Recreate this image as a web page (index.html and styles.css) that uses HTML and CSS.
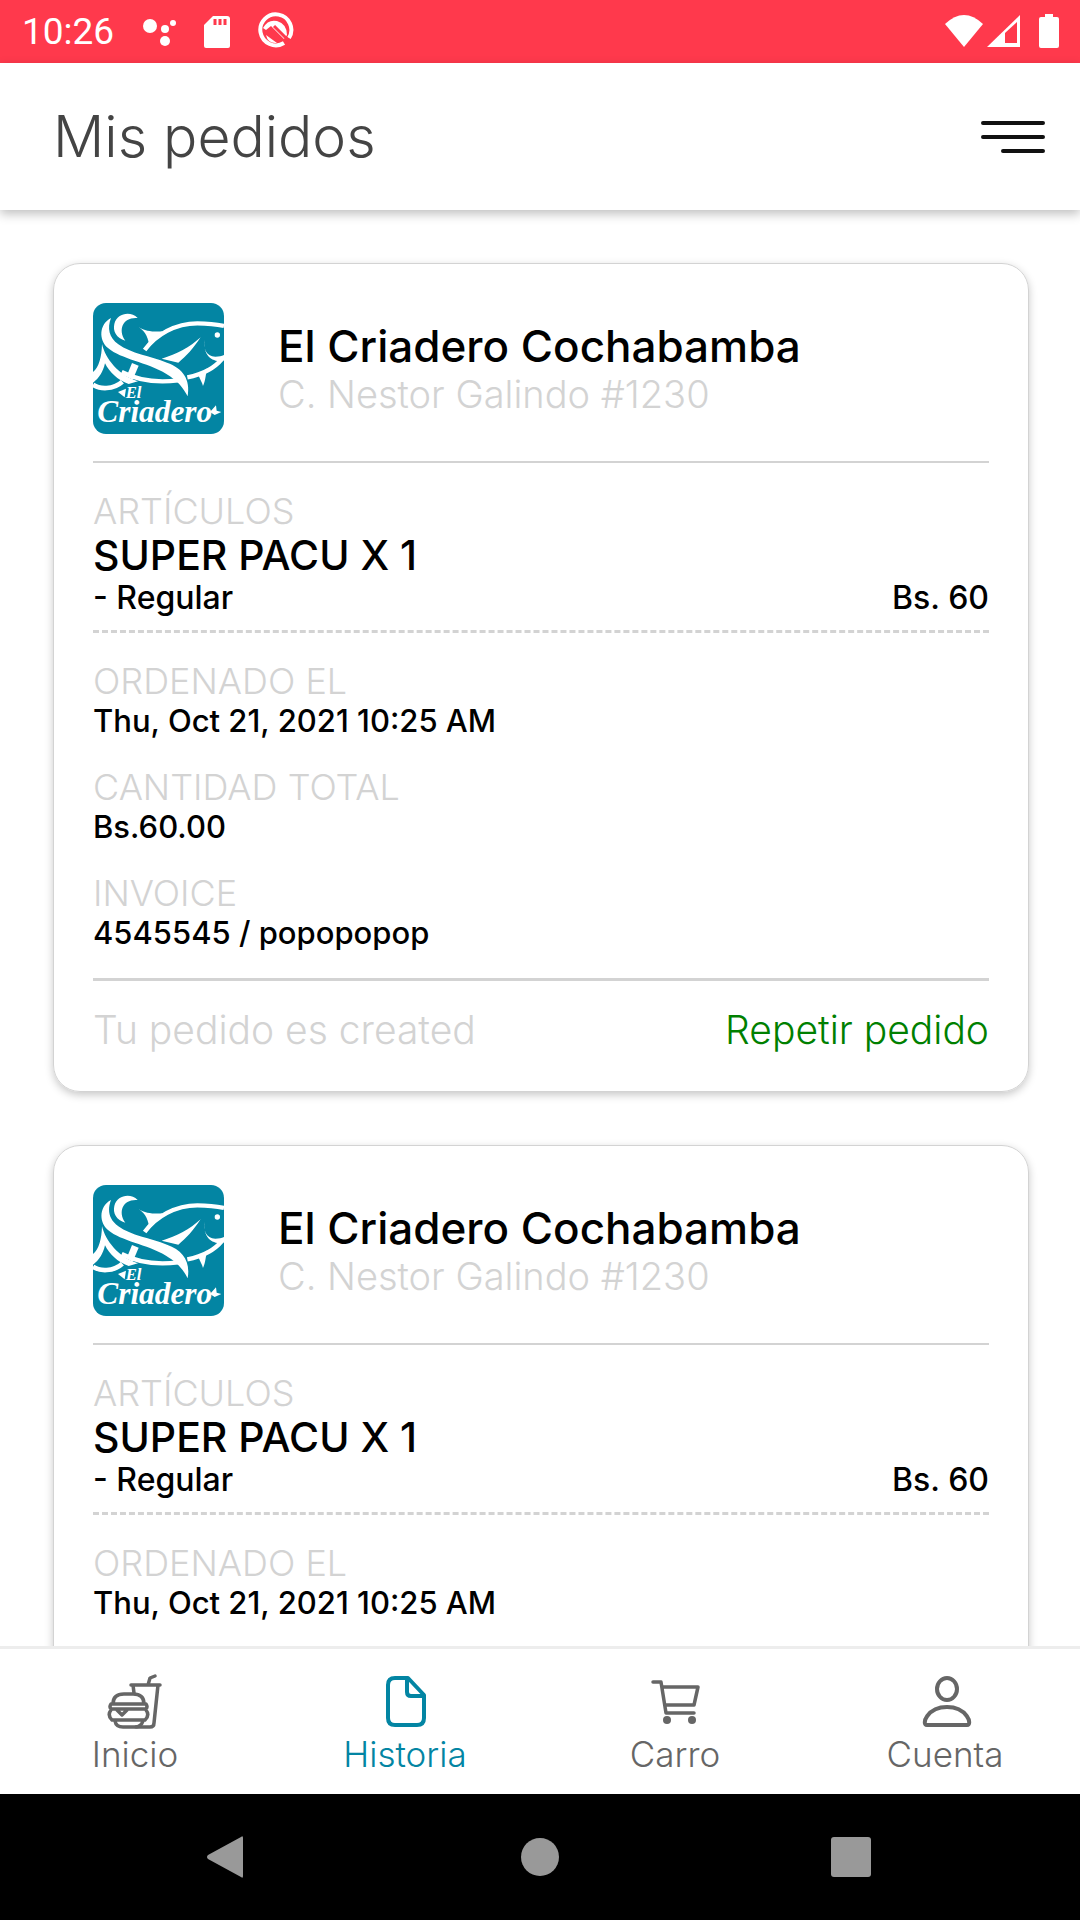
FILE: index.html
```html
<!DOCTYPE html>
<html lang="es">
<head>
<meta charset="utf-8">
<meta name="viewport" content="width=device-width, initial-scale=1">
<title>Mis pedidos</title>
<link rel="stylesheet" href="styles.css">
</head>
<body>
<svg class="sprite" aria-hidden="true">
  <symbol id="fish" viewBox="39 39 393 393">
    <g fill="#fff">
      <path d="M93 84C58 102 55 150 84 174c40 34 116 42 174 77 34 20 52 42 65 68 9-52-15-84-62-101-50-20-108-27-146-55-28-20-34-48-22-79z"/>
      <path d="M173 84c-22-22-62-14-70 18-5 22 6 42 33 50-24-34-6-72 37-68z"/>
      <path d="M176 111c20 14 50 15 72 13l-40 48c-2-26-10-46-32-61z"/>
      <path d="M362 142c-24 36-43 56-67 76l-50-12c46-13 84-34 117-64z"/>
      <path d="M66 162c10 44 50 94 108 112l-28 8c-34-12-58-36-71-62-6 26-18 45-36 58v-32c18-14 26-45 27-84z"/>
      <path d="M156 219l20 8-18 42-18-10z"/>
      <path d="M355 255l28-21c-7 18-5 34-14 54-3-12-8-18-14-33z"/>
      <path d="M376 146c-9 28 2 52 30 54 12 0 18-2 26-5v16c-36 10-68-20-56-65z"/>
      <circle cx="412" cy="135" r="8"/>
      <path d="M114 306l24-10-4 26z"/>
      <path d="M390 366l18-20 2 16 14 4-20 9z"/>
    </g>
    <g fill="none" stroke="#fff" stroke-width="13">
      <path d="M194 180c34-46 92-80 158-80 32 0 58 3 80 8"/>
      <path d="M125 246c42 22 100 34 170 25M322 262c42-8 82-26 108-60"/>
      <path d="M39 284c20 14 60 16 88-9" stroke-width="14"/>
    </g>
  </symbol>
</svg>

<div class="status-bar">
  <time class="clock">10:26</time>
  <svg class="status-left" viewBox="0 0 156 41" aria-hidden="true">
    <g fill="#fff">
      <circle cx="8" cy="15" r="7"/><circle cx="23" cy="18" r="4"/><circle cx="31" cy="12" r="3"/><circle cx="23" cy="30" r="5"/>
      <path d="M71 5h14q3 0 3 3v27q0 2-2 2H64q-2 0-2-2V14z"/>
      <path d="M121 17q5-9 14-7 10 3 10 14l-3 4-13-13-5 4zM124 24l11 8q-9 1-11-8z"/>
    </g>
    <path d="M73 8v6M78 8v6M83 8v6" stroke="#ff394c" stroke-width="3"/>
    <path d="M142 32a15.500 15.500 0 1 1 5-5" fill="none" stroke="#fff" stroke-width="4"/>
    <path d="M132 15l14 14" stroke="#ff394c" stroke-width="3"/>
  </svg>
  <svg class="status-right" viewBox="0 0 116 36" aria-hidden="true">
    <g fill="#fff">
      <path d="M1 10Q20-8 39 10L20 33z"/>
      <path d="M43 33L76 1v32z"/>
      <path d="M101 0h8v3h4q2 0 2 2v27q0 2-2 2H97q-2 0-2-2V5q0-2 2-2h4z"/>
    </g>
    <path d="M61 19L73 8v21H61z" fill="#ff394c"/>
  </svg>
</div>

<header class="app-header">
  <h1>Mis pedidos</h1>
  <button class="menu" type="button" aria-label="Menú">
    <svg viewBox="0 0 64 34"><path d="M2 3h60M2 17h60M22 31h40" fill="none" stroke="#111" stroke-width="4" stroke-linecap="round"/></svg>
  </button>
</header>

<main class="orders">
  <article class="order">
    <div class="shop">
      <svg class="logo" viewBox="39 39 393 393">
        <use href="#fish" x="39" y="39" width="393" height="393"/>
        <text class="logo-small" x="137" y="324">El</text>
        <text class="logo-large" x="52" y="396">Criadero</text>
      </svg>
      <div>
        <h2>El Criadero Cochabamba</h2>
        <p class="address">C. Nestor Galindo #1230</p>
      </div>
    </div>
    <section class="items">
      <h3>ARTÍCULOS</h3>
      <p class="item-name">SUPER PACU X 1</p>
      <p class="item-line"><span>- Regular</span><span>Bs. 60</span></p>
    </section>
    <dl class="details">
      <div><dt>ORDENADO EL</dt><dd>Thu, Oct 21, 2021 10:25 AM</dd></div>
      <div><dt>CANTIDAD TOTAL</dt><dd>Bs.60.00</dd></div>
      <div><dt>INVOICE</dt><dd>4545545 / popopopop</dd></div>
    </dl>
    <footer class="order-footer">
      <span>Tu pedido es created</span>
      <button class="repeat" type="button">Repetir pedido</button>
    </footer>
  </article>

  <article class="order">
    <div class="shop">
      <svg class="logo" viewBox="39 39 393 393">
        <use href="#fish" x="39" y="39" width="393" height="393"/>
        <text class="logo-small" x="137" y="324">El</text>
        <text class="logo-large" x="52" y="396">Criadero</text>
      </svg>
      <div>
        <h2>El Criadero Cochabamba</h2>
        <p class="address">C. Nestor Galindo #1230</p>
      </div>
    </div>
    <section class="items">
      <h3>ARTÍCULOS</h3>
      <p class="item-name">SUPER PACU X 1</p>
      <p class="item-line"><span>- Regular</span><span>Bs. 60</span></p>
    </section>
    <dl class="details">
      <div><dt>ORDENADO EL</dt><dd>Thu, Oct 21, 2021 10:25 AM</dd></div>
    </dl>
  </article>
</main>

<nav class="tabs">
  <a href="#inicio">
    <svg viewBox="0 0 56 56" aria-hidden="true"><g fill="none" stroke="currentColor" stroke-width="3.500" stroke-linecap="round" stroke-linejoin="round">
      <path d="M24 12h29M41 12l2-7 5-2M26 12l1 8M51 12l-4 38q0 4-4 4H29"/>
      <path d="M6 31q0-10 11-10h9q11 0 11 10M4 31h35q2 3 0 5H4q-2-2 0-5zM4 37q-4 5 1 10h33q5-5 1-10M10 37l5 5 5-5M8 48q1 6 8 6h12q6 0 8-6"/>
    </g></svg>
    <span>Inicio</span>
  </a>
  <a class="active" href="#historia" aria-current="page">
    <svg viewBox="0 0 56 56" aria-hidden="true"><g fill="none" stroke="currentColor" stroke-width="4" stroke-linejoin="round">
      <path d="M31 5H18q-7 0-7 7v33q0 7 7 7h22q7 0 7-7V22zM30 5v14q0 4 4 4h13"/>
    </g></svg>
    <span>Historia</span>
  </a>
  <a href="#carro">
    <svg viewBox="0 0 56 56" aria-hidden="true"><g fill="none" stroke="currentColor" stroke-width="3.500" stroke-linecap="round" stroke-linejoin="round">
      <path d="M6 9h8l5 31h28M16 14h35l-4 18H18"/></g>
      <g fill="currentColor"><circle cx="20" cy="47" r="4"/><circle cx="45" cy="47" r="4"/></g>
    </svg>
    <span>Carro</span>
  </a>
  <a href="#cuenta">
    <svg viewBox="0 0 56 56" aria-hidden="true"><g fill="none" stroke="currentColor" stroke-width="4" stroke-linejoin="round">
      <ellipse cx="30" cy="16" rx="10" ry="11"/><path d="M10 52C4 52 10 34 30 34s26 18 20 18z"/>
    </g></svg>
    <span>Cuenta</span>
  </a>
</nav>

<div class="system-bar">
  <button type="button" aria-label="Atrás"><svg viewBox="0 0 44 44"><path d="M36 2q2-2 2 1v38q0 3-2 1L3 24q-2-2 0-4z"/></svg></button>
  <button type="button" aria-label="Inicio del sistema"><svg viewBox="0 0 44 44"><circle cx="22" cy="22" r="19"/></svg></button>
  <button type="button" aria-label="Recientes"><svg viewBox="0 0 44 44"><rect x="0" y="2" width="40" height="40" rx="3"/></svg></button>
</div>
</body>
</html>
```
FILE: styles.css
```css
* { box-sizing: border-box; }

body {
  margin: 0;
  height: 100vh;
  display: flex;
  flex-direction: column;
  background: #fff;
  color: #000;
  font-family: Inter, "Open Sans", sans-serif;
}

h1, h2, h3, p, dl, dd { margin: 0; }

button {
  padding: 0;
  border: 0;
  background: none;
  font: inherit;
  color: inherit;
}

svg { display: block; }

.sprite { position: absolute; width: 0; height: 0; }

.status-bar {
  flex: none;
  display: flex;
  align-items: center;
  height: 63px;
  padding: 0 20px 0 22px;
  background: #ff394c;
  color: #fff;
}

.clock {
  font-family: Roboto, sans-serif;
  font-size: 37px;
  line-height: 44px;
}

.status-left { width: 156px; height: 41px; margin-left: 28px; }
.status-right { width: 116px; height: 36px; margin-left: auto; }

.app-header {
  flex: none;
  position: relative;
  display: flex;
  align-items: center;
  justify-content: space-between;
  height: 147px;
  padding: 0 35px 0 53px;
  background: #fff;
  box-shadow: 0 4px 10px rgba(0, 0, 0, 0.25);
}

h1 {
  color: #444;
  font-size: 57px;
  font-weight: 300;
  line-height: 64px;
}

.menu svg { width: 64px; height: 34px; }

.orders {
  flex: 1;
  min-height: 0;
  overflow: hidden;
  display: flex;
  flex-direction: column;
  gap: 53px;
  padding: 53px 51px 0 53px;
}

.order {
  flex: none;
  padding: 39px;
  border: 1px solid #d3d3d3;
  border-radius: 27px;
  box-shadow: 0 3px 8px rgba(0, 0, 0, 0.22);
}

.shop {
  display: flex;
  align-items: center;
  gap: 54px;
  padding-bottom: 27px;
  border-bottom: 2px solid #d3d3d3;
}

.logo {
  flex: none;
  width: 131px;
  height: 131px;
  border-radius: 13px;
  background: #0385a3;
}

.logo-small, .logo-large {
  fill: #fff;
  font-family: "Liberation Serif", serif;
  font-style: italic;
  font-weight: 700;
}
.logo-small { font-size: 50px; }
.logo-large { font-size: 94px; }

h2 {
  font-size: 44px;
  font-weight: 500;
  line-height: 50px;
}

.address {
  color: #d3d3d3;
  font-size: 38px;
  font-weight: 300;
  line-height: 46px;
}

.items {
  padding: 27px 0 12px;
  border-bottom: 3px dashed #d3d3d3;
}

h3, dt {
  color: #d3d3d3;
  font-size: 36px;
  font-weight: 300;
  line-height: 42px;
}

.item-name {
  font-size: 41px;
  font-weight: 500;
  line-height: 46px;
}

.item-line {
  display: flex;
  justify-content: space-between;
  font-size: 32px;
  font-weight: 500;
  line-height: 40px;
}

.details {
  display: flex;
  flex-direction: column;
  gap: 26px;
  padding: 27px 0 26px;
  border-bottom: 3px solid #d3d3d3;
}

dd {
  font-size: 31px;
  font-weight: 500;
  line-height: 38px;
}

.order-footer {
  display: flex;
  justify-content: space-between;
  padding-top: 27px;
  color: #d3d3d3;
  font-size: 39px;
  font-weight: 300;
  line-height: 44px;
}

.repeat { color: #008000; }

.tabs {
  flex: none;
  display: grid;
  grid-template-columns: repeat(4, 1fr);
  height: 148px;
  border-top: 3px solid #ededed;
  background: #fff;
}

.tabs a {
  display: flex;
  flex-direction: column;
  align-items: center;
  padding-top: 24px;
  color: #666;
  font-size: 35px;
  font-weight: 300;
  line-height: 40px;
  text-decoration: none;
}

.tabs svg { width: 56px; height: 56px; margin-bottom: 5px; }
.tabs .active { color: #0385a3; }

.system-bar {
  flex: none;
  display: flex;
  align-items: center;
  justify-content: space-between;
  height: 126px;
  padding: 0 19%;
  background: #000;
  fill: #999;
}

.system-bar svg { width: 44px; height: 44px; }
```
